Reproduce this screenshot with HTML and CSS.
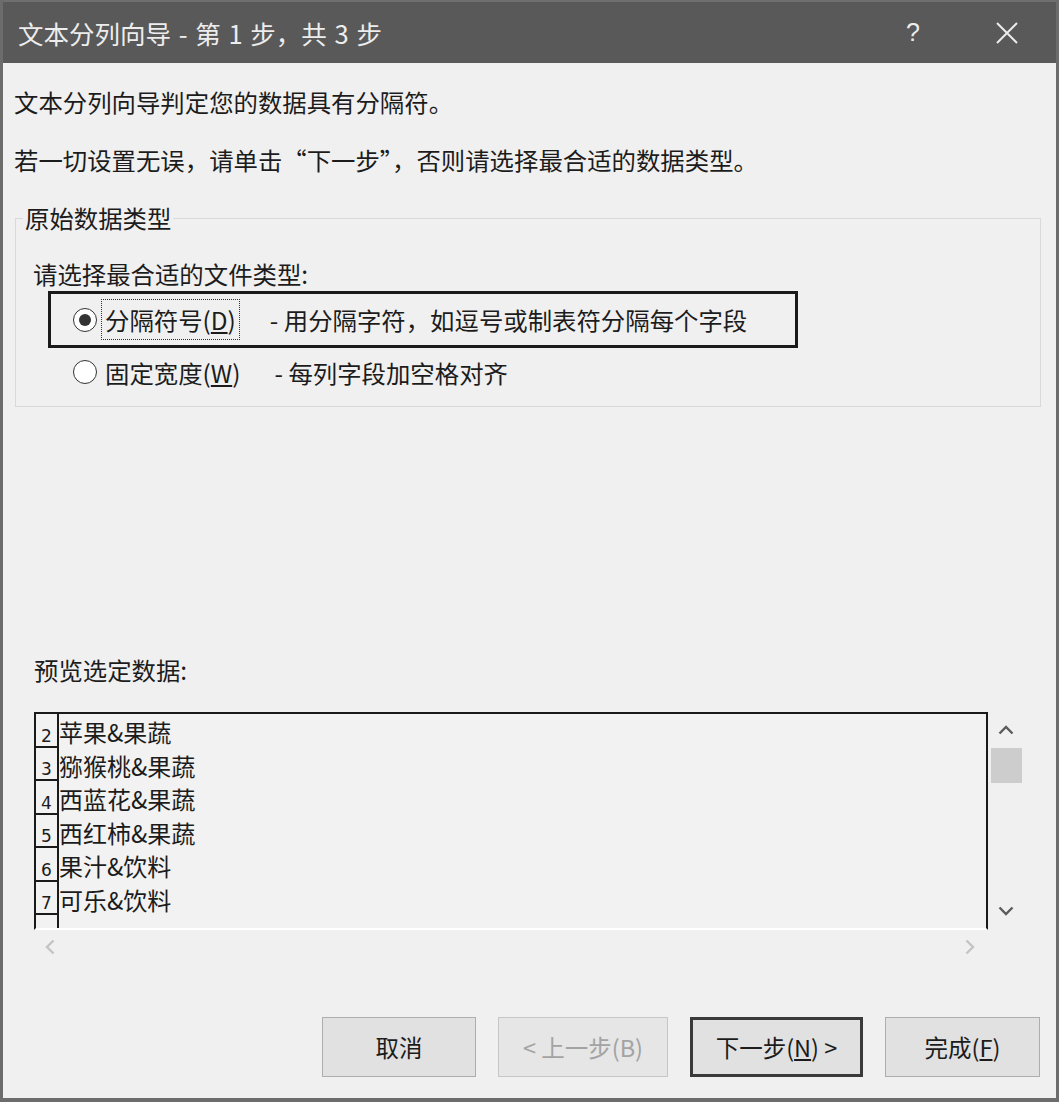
FILE: index.html
```html
<!DOCTYPE html>
<html lang="zh-CN">
<head>
<meta charset="utf-8">
<title>文本分列向导</title>
<link rel="stylesheet" href="styles.css">
</head>
<body>
<div class="window">
  <div class="titlebar">
    <span class="title">文本分列向导 - 第 1 步，共 3 步</span>
    <span class="help">?</span>
    <span class="close"><svg width="24" height="24" viewBox="0 0 24 24"><path d="M2 2 L22 22 M22 2 L2 22" stroke="#ececec" stroke-width="2" fill="none"/></svg></span>
  </div>
  <div class="content">
    <p class="intro first">文本分列向导判定您的数据具有分隔符。</p>
    <p class="intro second">若一切设置无误，请单击“下一步”，否则请选择最合适的数据类型。</p>
    <fieldset class="group">
      <legend>原始数据类型</legend>
      <div class="prompt">请选择最合适的文件类型:</div>
      <div class="option focused">
        <span class="radio checked"></span>
        <span class="label dotted">分隔符号(<u>D</u>)</span>
        <span class="desc">- 用分隔字符，如逗号或制表符分隔每个字段</span>
      </div>
      <div class="option plain">
        <span class="radio"></span>
        <span class="label">固定宽度(<u>W</u>)</span>
        <span class="desc">- 每列字段加空格对齐</span>
      </div>
    </fieldset>
    <div class="preview-label">预览选定数据:</div>
    <div class="preview">
      <div class="grid">
        <div class="row"><span class="num">2</span><span class="data">苹果&amp;果蔬</span></div>
        <div class="row"><span class="num">3</span><span class="data">猕猴桃&amp;果蔬</span></div>
        <div class="row"><span class="num">4</span><span class="data">西蓝花&amp;果蔬</span></div>
        <div class="row"><span class="num">5</span><span class="data">西红柿&amp;果蔬</span></div>
        <div class="row"><span class="num">6</span><span class="data">果汁&amp;饮料</span></div>
        <div class="row"><span class="num">7</span><span class="data">可乐&amp;饮料</span></div>
        <div class="row"><span class="num"></span><span class="data"></span></div>
      </div>
      <div class="vscroll">
        <svg class="chev up" width="16" height="10" viewBox="0 0 16 10"><path d="M1.5 8.5 L8 2 L14.5 8.5" stroke="#5c5c5c" stroke-width="2.4" fill="none"/></svg>
        <div class="thumb"></div>
        <svg class="chev down" width="16" height="10" viewBox="0 0 16 10"><path d="M1.5 1.5 L8 8 L14.5 1.5" stroke="#5c5c5c" stroke-width="2.4" fill="none"/></svg>
      </div>
      <div class="hscroll">
        <svg width="10" height="16" viewBox="0 0 10 16"><path d="M8.5 1.5 L2 8 L8.5 14.5" stroke="#c4c4c4" stroke-width="2.4" fill="none"/></svg>
        <svg width="10" height="16" viewBox="0 0 10 16"><path d="M1.5 1.5 L8 8 L1.5 14.5" stroke="#c4c4c4" stroke-width="2.4" fill="none"/></svg>
      </div>
      <div class="corner"></div>
    </div>
    <div class="buttons">
      <button class="btn w154">取消</button>
      <button class="btn w170 disabled">&lt; 上一步(B)</button>
      <button class="btn w173 default">下一步(<u>N</u>) &gt;</button>
      <button class="btn w155">完成(<u>F</u>)</button>
    </div>
  </div>
</div>
</body>
</html>
```
FILE: styles.css
```css
* { box-sizing: border-box; }
html, body { margin: 0; padding: 0; background: #f0f0f0; }
body {
  font-family: "Noto Sans CJK SC", "Microsoft YaHei", sans-serif;
  color: #1c1c1c;
}
.window {
  width: 1059px;
  height: 1102px;
  background: #f0f0f0;
  border-left: 3px solid #6c6c6c;
  border-right: 3px solid #6c6c6c;
  border-bottom: 4px solid #6c6c6c;
  display: flex;
  flex-direction: column;
}
.titlebar {
  height: 63px;
  background: #595959;
  border-top: 2px solid #6f6f6f;
  display: flex;
  align-items: center;
  padding: 0 19px 0 15px;
  color: #ededed;
  flex: none;
}
.title { flex: 1; font-size: 25.5px; line-height: 30px; word-spacing: 2px; }
.help { width: 40px; text-align: center; font-size: 25px; font-family: "Liberation Sans", sans-serif; }
.close { width: 60px; margin-left: 44px; display: flex; justify-content: center; }

.content {
  flex: 1;
  display: flex;
  flex-direction: column;
  padding-left: 11px;
}
.intro { margin: 0; font-size: 24.4px; line-height: 34px; }
.intro.first { margin-top: 22px; }
.intro.second { margin-top: 24px; }

.group {
  margin: 24px 0 0 1px;
  width: 1026px;
  border: 1px solid #d9d9d9;
  padding: 0 0 10px 17px;
  min-width: 0;
}
.group legend {
  font-size: 24.4px;
  line-height: 34px;
  padding: 0 2px;
  margin-left: -10px;
}
.prompt { font-size: 24.4px; line-height: 34px; margin-top: 22px; }
.option {
  display: flex;
  align-items: center;
  margin-left: 15px;
  font-size: 24.4px;
}
.option.focused {
  width: 750px;
  height: 57px;
  border: 3px solid #1a1a1a;
  padding-left: 22px;
}
.option.plain { height: 48px; padding-left: 25px; }
.radio {
  width: 24px;
  height: 24px;
  border-radius: 50%;
  border: 1.5px solid #333;
  background: #fff;
  display: flex;
  align-items: center;
  justify-content: center;
  flex: none;
}
.radio.checked::after {
  content: "";
  width: 12px;
  height: 12px;
  border-radius: 50%;
  background: #333;
}
.label {
  margin-left: 4px;
  padding: 0 3px;
  height: 41px;
  line-height: 39px;
  border: 1px solid transparent;
}
.label.dotted { border: 1px dotted #333; }
.desc { margin-left: 30px; }

.preview-label { font-size: 24.4px; line-height: 34px; margin: 246px 0 0 20px; }
.preview {
  margin: 25px 0 0 20px;
  width: 990px;
  display: grid;
  grid-template-columns: 954px 36px;
  grid-template-rows: 218px 34px;
}
.grid {
  border: 2px solid #1a1a1a;
  border-bottom: 2px solid #ffffff;
  background: #f2f2f2;
  overflow: hidden;
}
.row { display: flex; height: 33.5px; }
.num {
  width: 23px;
  flex: none;
  border-right: 2px solid #1a1a1a;
  border-bottom: 2px solid #1a1a1a;
  font-family: "DejaVu Sans", sans-serif;
  font-size: 17px;
  text-align: center;
  line-height: 1;
  display: flex;
  align-items: flex-end;
  justify-content: center;
  padding-bottom: 1px;
}
.row:last-child .num { border-bottom: 0; }
.data { font-size: 24px; line-height: 36px; padding-left: 0; white-space: nowrap; }
.vscroll { display: flex; flex-direction: column; align-items: center; }
.chev.up { margin-top: 13px; }
.thumb { width: 31px; height: 35px; background: #cdcdcd; margin-top: 13px; }
.chev.down { margin-top: auto; margin-bottom: 14px; }
.hscroll {
  display: flex;
  justify-content: space-between;
  align-items: center;
  padding: 0 13px 0 11px;
}
.buttons {
  margin-top: auto;
  display: flex;
  justify-content: flex-end;
  gap: 22px;
  padding: 0 16px 21px 0;
}
.btn {
  height: 60px;
  background: #e1e1e1;
  border: 1px solid #adadad;
  font-family: "Noto Sans CJK SC", sans-serif;
  font-size: 23.5px;
  color: #1c1c1c;
  padding: 0;
}
.btn.disabled { color: #a3a3a3; border-color: #c6c6c6; background: #e6e6e6; }
.btn.default { border: 3px solid #3a3a3a; }
.w154 { width: 154px; }
.w155 { width: 155px; }
.w170 { width: 170px; }
.w173 { width: 173px; }
```
